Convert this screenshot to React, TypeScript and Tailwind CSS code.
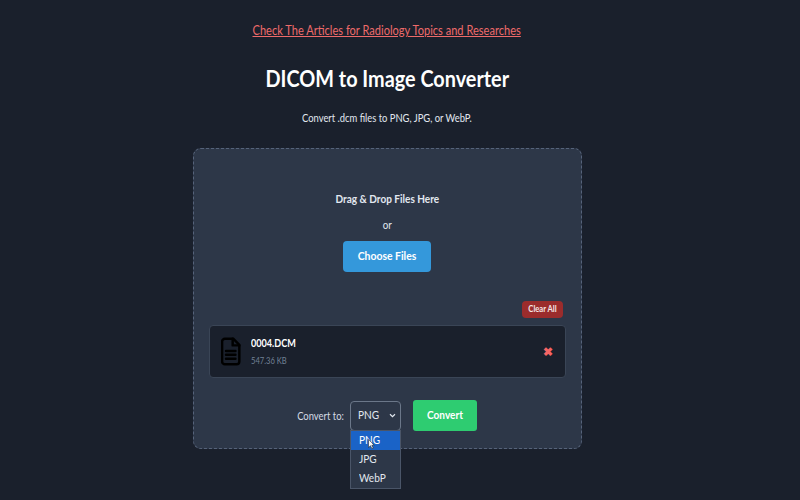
import React from "react";

function FileIcon() {
  return (
    <svg width="20" height="29" viewBox="0 0 18 26" fill="none" stroke="#000" strokeWidth="2.2" strokeLinejoin="round" strokeLinecap="round">
      <path d="M3.5 1.5H11L16.5 7V22a2.5 2.5 0 0 1-2.5 2.5H3.5A2.5 2.5 0 0 1 1 22V4a2.5 2.5 0 0 1 2.5-2.5Z" />
      <path d="M10.5 1.5V7.5H16.5" />
      <path d="M4.5 12.5H13M4.5 16H13M4.5 19.5H13" />
    </svg>
  );
}

export default function App() {
  return (
    <div className="h-[500px] overflow-hidden bg-[#1a202c] pr-[26px] flex flex-col items-center font-['Lato','Noto_Sans',sans-serif] text-[#e2e8f0]">
      <a className="mt-[20px] h-[20px] leading-[20px] text-[13px] text-[#ee6a6a] underline block whitespace-nowrap scale-x-[0.851]">Check The Articles for Radiology Topics and Researches</a>
      <h1 className="mt-[20px] h-[36px] leading-[36px] text-[23px] font-bold text-white whitespace-nowrap scale-x-[0.862]">DICOM to Image Converter</h1>
      <p className="mt-[13px] h-[18px] leading-[18px] text-[11.5px] whitespace-nowrap scale-x-[0.817]">Convert .dcm files to PNG, JPG, or WebP.</p>
      <div className="relative mt-[21px] w-[389px] h-[301px] rounded-[8px] border border-dashed border-[#56637a] bg-[#2d3748] flex flex-col items-center px-[15px]">
        <div className="mt-[41px] h-[18px] leading-[18px] text-[11.5px] font-bold whitespace-nowrap scale-x-[0.873]">Drag &amp; Drop Files Here</div>
        <div className="mt-[8px] h-[18px] leading-[18px] text-[11.5px] scale-x-[0.85]">or</div>
        <button className="mt-[7px] w-[88px] h-[31px] pb-[2px] rounded-[4px] bg-[#3498db] text-white text-[12px] font-bold">
          <span className="block scale-x-[0.868]">Choose Files</span>
        </button>
        <div className="mt-[29px] w-full flex justify-end pr-[3px]">
          <button className="w-[41px] h-[17px] rounded-[4px] bg-[#9b2c2c] text-[#f5e6e6] text-[8.5px] font-bold">
            <span className="block whitespace-nowrap scale-x-[0.9]">Clear All</span>
          </button>
        </div>
        <div className="mt-[7px] w-full h-[53px] rounded-[4px] border border-[#3a4556] bg-[#1a202c] flex items-center pl-[11px] pr-[8px]">
          <FileIcon />
          <div className="ml-[10px] flex flex-col items-start">
            <span className="h-[16px] leading-[16px] text-[11.5px] font-bold text-white origin-left scale-x-[0.79]">0004.DCM</span>
            <span className="mt-[3px] h-[14px] leading-[14px] text-[9.5px] text-[#718096] origin-left scale-x-[0.8]">547.36 KB</span>
          </div>
          <span className="ml-auto mr-[4px] font-bold text-[#f56565] text-[12px]">✖</span>
        </div>
        <div className="mt-[22px] flex items-center">
          <div className="w-[47px] flex justify-center">
            <span className="shrink-0 whitespace-nowrap text-[11.5px] text-[#d5dbe4] scale-x-[0.82]">Convert to:</span>
          </div>
          <div className="relative ml-[6px]">
            <div className="w-[51px] h-[30px] pb-[2px] rounded-[4px] border border-[#6b7789] bg-[#2d3748] flex items-center justify-between pl-[7px] pr-[4px] text-[12px]">
              <span className="origin-left scale-x-[0.84]">PNG</span>
              <svg className="mt-[2px]" width="7" height="5" viewBox="0 0 8 6" fill="none" stroke="#e2e8f0" strokeWidth="1.4"><path d="M1 1.5l3 3 3-3" /></svg>
            </div>
            <div className="absolute top-[29px] left-0 w-[51px] h-[59px] border border-[#4a5568] bg-[#2d3748] flex flex-col text-[12px]">
              <div className="relative h-[19px] leading-[17px] pl-[8px] bg-[#1a63c7] text-white">
                <span className="block origin-left scale-x-[0.84]">PNG</span>
                <svg className="absolute left-[17px] top-[8px]" width="7" height="11" viewBox="0 0 7 11"><path d="M0.5 0.5v8l2-1.8 1.4 3 1.3-.6-1.4-2.9h2.4Z" fill="#f8fafc" stroke="#111" strokeWidth="0.5" /></svg>
              </div>
              <div className="h-[19px] leading-[17px] pl-[8px]"><span className="block origin-left scale-x-[0.84]">JPG</span></div>
              <div className="h-[19px] leading-[17px] pl-[8px]"><span className="block origin-left scale-x-[0.84]">WebP</span></div>
            </div>
          </div>
          <button className="ml-[12px] w-[64px] h-[31px] pb-[2px] rounded-[3px] bg-[#2ecc71] text-white text-[12px] font-bold">
            <span className="block scale-x-[0.84]">Convert</span>
          </button>
        </div>
      </div>
    </div>
  );
}
